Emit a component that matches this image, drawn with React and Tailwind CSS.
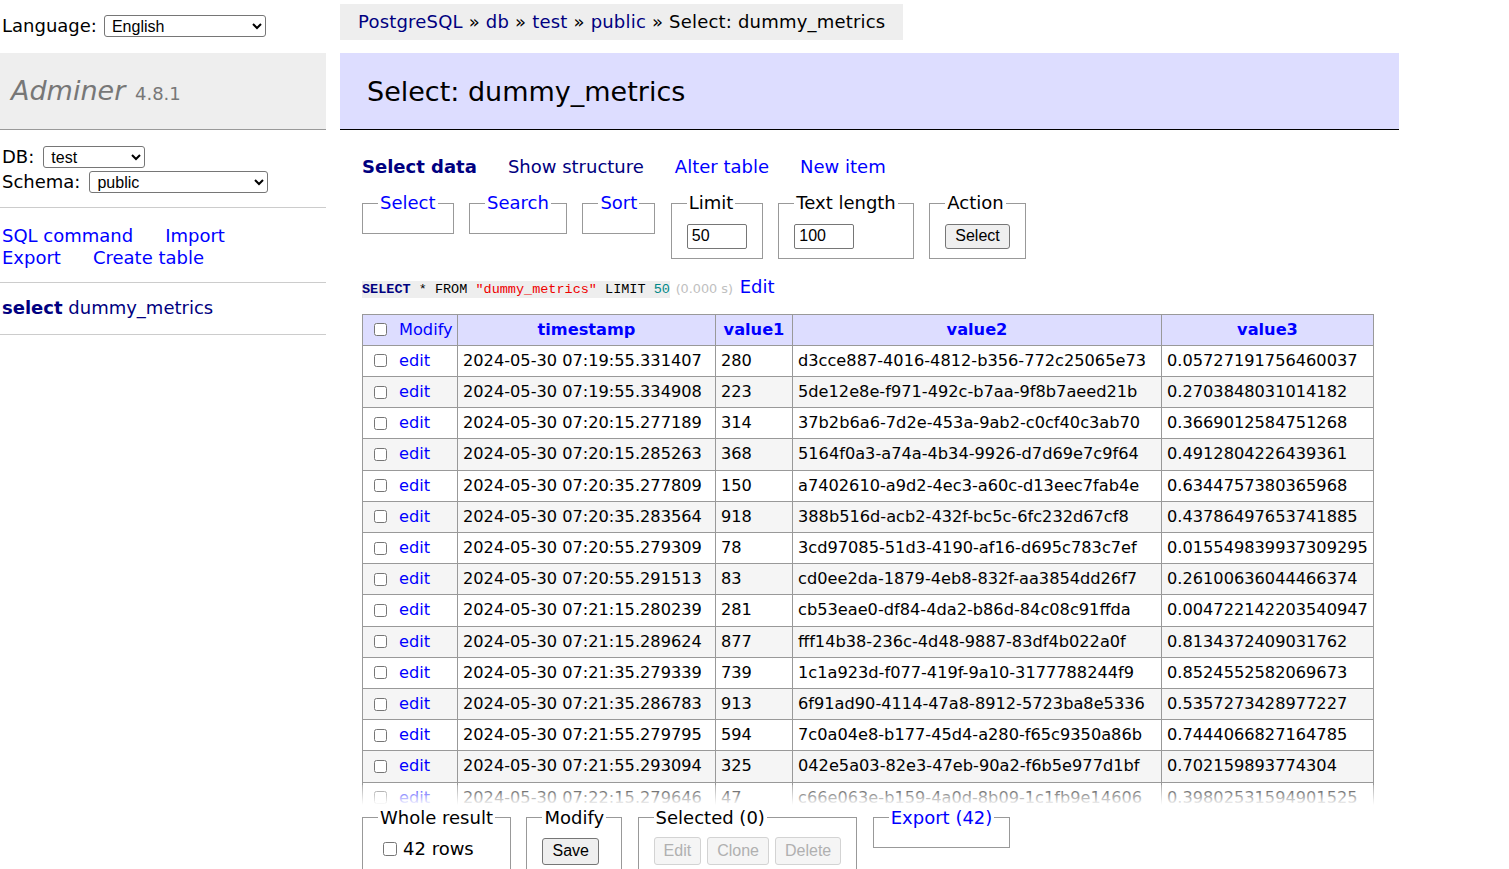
import React from 'react';

const rows = [
    ['2024-05-30 07:19:55.331407', '280', 'd3cce887-4016-4812-b356-772c25065e73', '0.05727191756460037'],
    ['2024-05-30 07:19:55.334908', '223', '5de12e8e-f971-492c-b7aa-9f8b7aeed21b', '0.2703848031014182'],
    ['2024-05-30 07:20:15.277189', '314', '37b2b6a6-7d2e-453a-9ab2-c0cf40c3ab70', '0.3669012584751268'],
    ['2024-05-30 07:20:15.285263', '368', '5164f0a3-a74a-4b34-9926-d7d69e7c9f64', '0.4912804226439361'],
    ['2024-05-30 07:20:35.277809', '150', 'a7402610-a9d2-4ec3-a60c-d13eec7fab4e', '0.6344757380365968'],
    ['2024-05-30 07:20:35.283564', '918', '388b516d-acb2-432f-bc5c-6fc232d67cf8', '0.43786497653741885'],
    ['2024-05-30 07:20:55.279309', '78', '3cd97085-51d3-4190-af16-d695c783c7ef', '0.015549839937309295'],
    ['2024-05-30 07:20:55.291513', '83', 'cd0ee2da-1879-4eb8-832f-aa3854dd26f7', '0.26100636044466374'],
    ['2024-05-30 07:21:15.280239', '281', 'cb53eae0-df84-4da2-b86d-84c08c91ffda', '0.004722142203540947'],
    ['2024-05-30 07:21:15.289624', '877', 'fff14b38-236c-4d48-9887-83df4b022a0f', '0.8134372409031762'],
    ['2024-05-30 07:21:35.279339', '739', '1c1a923d-f077-419f-9a10-3177788244f9', '0.8524552582069673'],
    ['2024-05-30 07:21:35.286783', '913', '6f91ad90-4114-47a8-8912-5723ba8e5336', '0.5357273428977227'],
    ['2024-05-30 07:21:55.279795', '594', '7c0a04e8-b177-45d4-a280-f65c9350a86b', '0.7444066827164785'],
    ['2024-05-30 07:21:55.293094', '325', '042e5a03-82e3-47eb-90a2-f6b5e977d1bf', '0.702159893774304'],
    ['2024-05-30 07:22:15.279646', '47', 'c66e063e-b159-4a0d-8b09-1c1fb9e14606', '0.39802531594901525'],
    ['2024-05-30 07:22:15.288127', '602', '9a0e4c17-3b5d-4f2e-a1c8-7d2b6e0f9c31', '0.5811203947160275'],
];

const selectCls = "h-[22px] border border-[#767676] rounded-[3px] bg-white text-black pl-[3px] font-['Liberation_Sans',Arial,sans-serif] text-[16px] leading-[20px]";
const btnCls = "border border-[#767676] rounded-[3px] bg-[#efefef] px-[9px] font-['Liberation_Sans',Arial,sans-serif] text-[16px] text-black";
const btnOff = "border border-[#d3d3d3] rounded-[3px] bg-[#f5f5f5] px-[9px] font-['Liberation_Sans',Arial,sans-serif] text-[16px] text-[#b0b0b0]";

const Fieldset = ({ legend, link, children }) => (
    <fieldset className="border border-[#999] px-[15px] pt-[9px] pb-[9px]">
        <legend className={link ? 'px-[2px] text-[#00f]' : 'px-[2px]'}>{legend}</legend>
        {children}
    </fieldset>
);

const Sidebar = () => (
    <div className="w-[326px] shrink-0">
        <div className="pt-[15px] pl-[2px] flex items-center gap-[7px] h-[37px]">
            <span>Language:</span>
            <select className={`${selectCls} w-[162px]`} defaultValue="en">
                <option value="en">English</option>
            </select>
        </div>
        <h1 className="mt-[16px] h-[77px] border-b border-[#999] bg-[#eee] pl-[11px] leading-[76px] text-[#777] font-normal">
            <span className="italic text-[27px]">Adminer</span>{' '}
            <span className="ml-[4px] text-[18px]">4.8.1</span>
        </h1>
        <div className="pl-[2px] pt-[16px] pb-[14px] border-b border-[#ccc]">
            <div className="flex items-center gap-[9px] h-[22px]">
                <span>DB:</span>
                <select className={`${selectCls} w-[102px]`} defaultValue="test">
                    <option value="test">test</option>
                </select>
            </div>
            <div className="flex items-center gap-[9px] h-[22px] mt-[3px]">
                <span>Schema:</span>
                <select className={`${selectCls} w-[179px]`} defaultValue="public">
                    <option value="public">public</option>
                </select>
            </div>
        </div>
        <div className="pl-[2px] pt-[17px] pb-[13px] border-b border-[#ccc] text-[#00f] leading-[22px]">
            <div className="flex gap-[32px]">
                <a href="#">SQL command</a>
                <a href="#">Import</a>
            </div>
            <div className="flex gap-[32px]">
                <a href="#">Export</a>
                <a href="#">Create table</a>
            </div>
        </div>
        <div className="pl-[2px] pt-[14px] pb-[14px] border-b border-[#ccc] text-[#000080]">
            <a href="#"><b>select</b> dummy_metrics</a>
        </div>
    </div>
);

const Breadcrumb = () => (
    <div className="mt-[4px] self-start h-[36px] leading-[36px] bg-[#eee] px-[18px] whitespace-nowrap tracking-[0.2px]">
        <a href="#" className="text-[#000080]">PostgreSQL</a> »{' '}
        <a href="#" className="text-[#000080]">db</a> »{' '}
        <a href="#" className="text-[#000080]">test</a> »{' '}
        <a href="#" className="text-[#000080]">public</a> » Select: dummy_metrics
    </div>
);

const th = "border border-[#999] px-[5px] py-[3px] font-bold text-[#00f] text-center";
const td = "border border-[#999] px-[5px] py-[3px]";

const DataTable = () => (
    <table className="border-collapse text-[16.2px] leading-[24.2px] whitespace-nowrap">
        <thead>
            <tr className="bg-[#ddf]">
                <td className="border border-[#999] w-[95px] py-[3px]">
                    <div className="flex items-center gap-[12px] pl-[11px] text-[#00f]">
                        <input type="checkbox" className="m-0 w-[13px] h-[13px]" />
                        <a href="#">Modify</a>
                    </div>
                </td>
                <th className={`${th} w-[258px]`}>timestamp</th>
                <th className={`${th} w-[77px]`}>value1</th>
                <th className={`${th} w-[369px]`}>value2</th>
                <th className={`${th} w-[212px]`}>value3</th>
            </tr>
        </thead>
        <tbody>
            {rows.map((r, i) => (
                <tr key={i} className={i % 2 ? 'bg-[#f5f5f5]' : 'bg-white'}>
                    <td className="border border-[#999] py-[3px]">
                        <div className="flex items-center gap-[12px] pl-[11px] text-[#00f]">
                            <input type="checkbox" className="m-0 w-[13px] h-[13px]" />
                            <a href="#">edit</a>
                        </div>
                    </td>
                    {r.map((c, j) => (
                        <td key={j} className={td}>{c}</td>
                    ))}
                </tr>
            ))}
        </tbody>
    </table>
);

export default function App() {
    return (
        <div className="h-[869px] overflow-hidden bg-white text-black flex font-['DejaVu_Sans',Verdana,sans-serif] text-[18px] leading-[22.5px]">
            <Sidebar />
            <div className="flex-1 min-w-0 flex flex-col pl-[14px]">
                <Breadcrumb />
                <h2 className="mt-[13px] w-[1059px] h-[77px] border-b border-black bg-[#ddf] pl-[27px] text-[27px] leading-[78px] font-normal">
                    Select: dummy_metrics
                </h2>
                <div className="pl-[22px]">
                    <div className="mt-[26px] flex gap-[31px]">
                        <a href="#" className="font-bold text-[#000080]">Select data</a>
                        <a href="#" className="text-[#000080]">Show structure</a>
                        <a href="#" className="text-[#00f]">Alter table</a>
                        <a href="#" className="text-[#00f]">New item</a>
                    </div>

                    <div className="mt-[13.5px] flex items-start gap-[15.5px]">
                        <Fieldset legend="Select" link />
                        <Fieldset legend="Search" link />
                        <Fieldset legend="Sort" link />
                        <Fieldset legend="Limit">
                            <input
                                type="text"
                                defaultValue="50"
                                className="block w-[60px] h-[25px] border border-[#767676] rounded-[2px] pl-[4px] font-['Liberation_Sans',Arial,sans-serif] text-[16px]"
                            />
                        </Fieldset>
                        <Fieldset legend="Text length">
                            <input
                                type="text"
                                defaultValue="100"
                                className="block w-[60px] h-[25px] border border-[#767676] rounded-[2px] pl-[4px] font-['Liberation_Sans',Arial,sans-serif] text-[16px]"
                            />
                        </Fieldset>
                        <Fieldset legend="Action">
                            <button type="button" className={`${btnCls} block h-[25px]`}>Select</button>
                        </Fieldset>
                    </div>

                    <p className="mt-[17px] whitespace-nowrap">
                        <code className="inline-block bg-[#eee] font-['Liberation_Mono',monospace] text-[13.5px] leading-[17px]">
                            <span className="font-bold text-[#000080]">SELECT</span> * FROM{' '}
                            <span className="text-[#e00]">"dummy_metrics"</span> LIMIT{' '}
                            <span className="text-[#088]">50</span>
                        </code>{' '}
                        <span className="text-[12.8px] text-[#c0c0c0]">(0.000 s)</span>{' '}
                        <a href="#" className="ml-[1px] text-[#00f]">Edit</a>
                    </p>

                    <div className="mt-[13.5px] h-[491px] overflow-hidden">
                        <DataTable />
                    </div>
                </div>

                <div className="relative -mt-[20px]">
                    <div className="h-[20px] bg-linear-to-b from-white/20 to-white" />
                    <div className="bg-white pl-[22px] pt-[2px]">
                        <div className="flex items-start gap-[15.5px]">
                            <Fieldset legend="Whole result">
                                <label className="flex items-center gap-[6px] pl-[5px]">
                                    <input type="checkbox" className="m-0 w-[14px] h-[14px]" />
                                    <span>42 rows</span>
                                </label>
                            </Fieldset>
                            <Fieldset legend="Modify">
                                <button type="button" className={`${btnCls} block h-[27px]`}>Save</button>
                            </Fieldset>
                            <Fieldset legend="Selected (0)">
                                <div className="flex gap-[6px] -mt-[1px]">
                                    <button type="button" disabled className={`${btnOff} h-[28px]`}>Edit</button>
                                    <button type="button" disabled className={`${btnOff} h-[28px]`}>Clone</button>
                                    <button type="button" disabled className={`${btnOff} h-[28px]`}>Delete</button>
                                </div>
                            </Fieldset>
                            <Fieldset legend="Export (42)" link />
                        </div>
                        <div className="h-[40px]" />
                    </div>
                </div>
            </div>
        </div>
    );
}
